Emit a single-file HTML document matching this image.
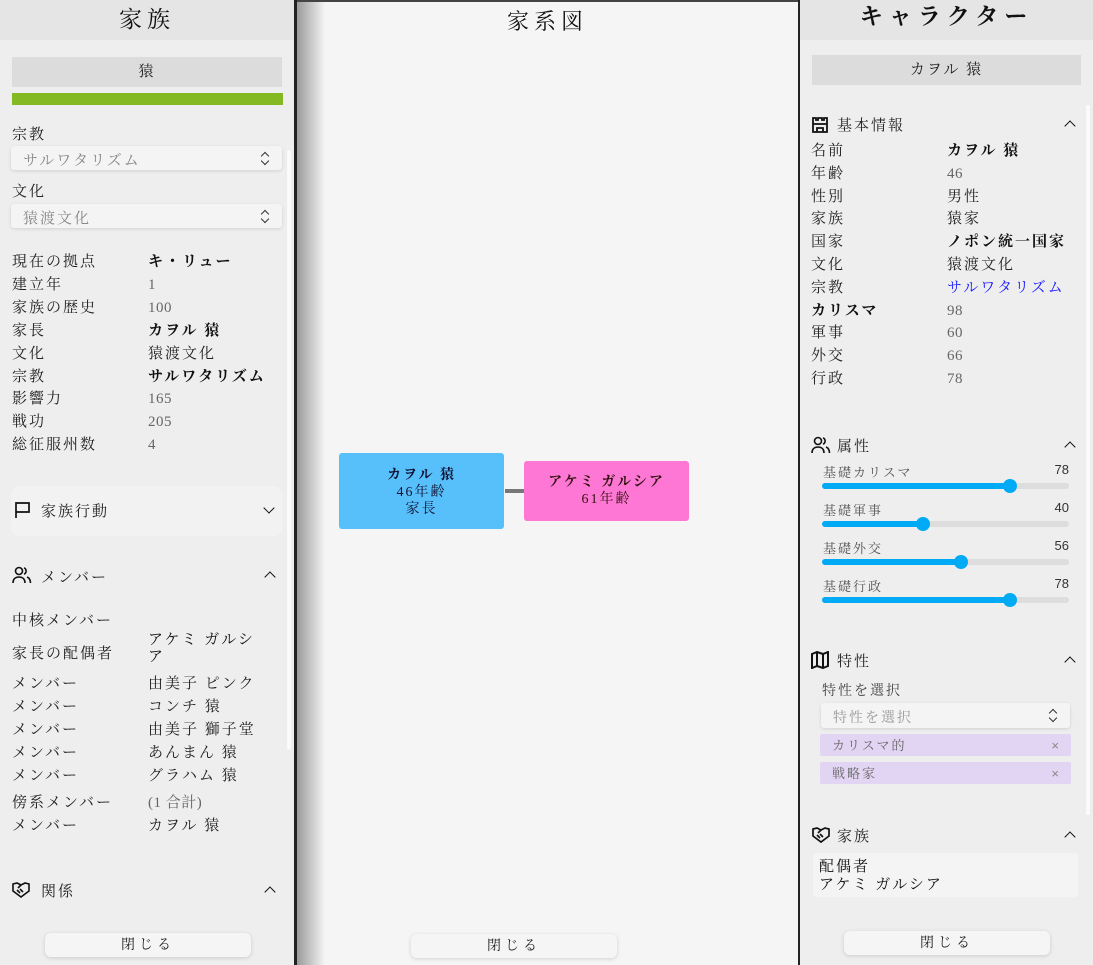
<!DOCTYPE html>
<html><head><meta charset="utf-8"><style>
*{margin:0;padding:0;box-sizing:border-box}
body{width:1093px;height:965px;overflow:hidden;background:#eee;font-family:"Liberation Serif","Noto Serif CJK SC",serif;color:#222;position:relative;font-size:15px;letter-spacing:2px}
.a{position:absolute;white-space:nowrap}
.hdr{position:absolute;top:0;height:40px;background:#e5e5e5;text-align:center;font-size:23px;line-height:40px;letter-spacing:5px;color:#111}
.btn{position:absolute;background:#dcdcdc;text-align:center;line-height:30px}
.sel{position:absolute;background:#f4f4f4;box-shadow:0 1px 3px rgba(0,0,0,.12);border-radius:3px;color:#888;padding-left:12px;display:flex;align-items:center;padding-top:2px}
.sel:after{content:"";position:absolute;right:14px;top:7px;width:5px;height:5px;border-left:1px solid #333;border-top:1px solid #333;transform:rotate(45deg)}
.sel:before{content:"";position:absolute;right:14px;top:12px;width:5px;height:5px;border-right:1px solid #333;border-bottom:1px solid #333;transform:rotate(45deg)}
.close{position:absolute;background:#f5f5f5;border-radius:6px;box-shadow:0 1px 4px rgba(0,0,0,.15);text-align:center;line-height:26px;font-size:14px;letter-spacing:4px}
.g{color:#666;letter-spacing:0.5px}
.b{font-weight:bold;color:#111}
.chev{position:absolute;width:8px;height:8px;border-left:1.6px solid #111;border-top:1.6px solid #111}
.up{transform:rotate(45deg)}
.dn{transform:rotate(225deg)}
.track{position:absolute;left:822px;width:247px;height:6px;border-radius:3px;background:#ddd}
.fill{position:absolute;left:0;top:0;height:6px;border-radius:3px;background:#00aaf5}
.knob{position:absolute;top:-4px;width:14px;height:14px;border-radius:50%;background:#00aaf5;margin-left:-7px}
.num{position:absolute;right:24px;font-family:"Liberation Sans",sans-serif;font-size:13px;color:#333;letter-spacing:0}
.sl{position:absolute;left:823px;font-size:13px;color:#555}
.tag{position:absolute;left:820px;width:251px;height:22px;background:#e2d4f3;color:#666;font-size:13px;line-height:23px;padding-left:12px;border-radius:2px}
.tag span{position:absolute;right:10px;color:#888;font-family:"Liberation Sans",sans-serif}
</style></head><body>
<!-- left panel -->
<div class="a" style="left:0;top:0;width:295px;height:965px;background:#eee"></div>
<div class="hdr" style="left:0;width:294px">家族</div>
<div class="btn" style="left:12px;top:57px;width:270px;height:30px">猿</div>
<div class="a" style="left:12px;top:93px;width:271px;height:12px;background:#84b923"></div>
<div class="a" style="left:12px;top:123px">宗教</div>
<div class="sel" style="left:11px;top:146px;width:271px;height:24px">サルワタリズム</div>
<div class="a" style="left:12px;top:180px">文化</div>
<div class="sel" style="left:11px;top:204px;width:271px;height:24px">猿渡文化</div>
<div class="a" style="left:12px;top:251px;line-height:22.9px">現在の拠点<br>建立年<br>家族の歴史<br>家長<br>文化<br>宗教<br>影響力<br>戦功<br>総征服州数</div>
<div class="a" style="left:148px;top:251px;line-height:22.9px"><span class="b">キ・リュー</span><br><span class="g">1</span><br><span class="g">100</span><br><span class="b">カヲル 猿</span><br>猿渡文化<br><span class="b">サルワタリズム</span><br><span class="g">165</span><br><span class="g">205</span><br><span class="g">4</span></div>
<div class="a" style="left:11px;top:486px;width:271px;height:50px;background:#f2f2f2;border-radius:8px"></div>
<svg class="a" style="left:14px;top:501px" width="18" height="18" viewBox="0 0 18 18" fill="none" stroke="#111" stroke-width="1.7"><path d="M2 17V2h13v9H2"/></svg>
<div class="a" style="left:41px;top:500px">家族行動</div>
<div class="chev dn" style="left:265px;top:504px"></div>
<svg class="a" style="left:12px;top:566px" width="20" height="18" viewBox="0 0 20 18" fill="none" stroke="#111" stroke-width="1.6"><circle cx="7" cy="5" r="3.5"/><path d="M1 17c0-4 2.5-6 6-6s6 2 6 6"/><path d="M12 1.8a3.5 3.5 0 0 1 0 6.4M15 11c2 .8 3.5 2.6 3.5 6"/></svg>
<div class="a" style="left:41px;top:566px">メンバー</div>
<div class="chev up" style="left:266px;top:573px"></div>
<div class="a" style="left:12px;top:609px">中核メンバー</div>
<div class="a" style="left:12px;top:642px">家長の配偶者</div>
<div class="a" style="left:148px;top:632px;line-height:17px;color:#111">アケミ ガルシ<br>ア</div>
<div class="a" style="left:12px;top:673px;line-height:22.9px">メンバー<br>メンバー<br>メンバー<br>メンバー<br>メンバー</div>
<div class="a" style="left:148px;top:673px;line-height:22.9px">由美子 ピンク<br>コンチ 猿<br>由美子 獅子堂<br>あんまん 猿<br>グラハム 猿</div>
<div class="a" style="left:12px;top:792px;line-height:22.9px">傍系メンバー<br>メンバー</div>
<div class="a" style="left:148px;top:792px;line-height:22.9px"><span class="g">(1 合計)</span><br>カヲル 猿</div>
<svg class="a" style="left:11px;top:881px" width="20" height="18" viewBox="0 0 20 18" fill="none" stroke="#111" stroke-width="1.6"><path d="M2 3l4-1 4 2 4-2 4 1v7l-8 6-8-6z"/><path d="M6 9l3 3M9 8l3 3M10 4l-3 3"/></svg>
<div class="a" style="left:41px;top:880px">関係</div>
<div class="chev up" style="left:266px;top:888px"></div>
<div class="close" style="left:45px;top:933px;width:206px;height:24px">閉じる</div>
<div class="a" style="left:287px;top:150px;width:4px;height:600px;background:#fafafa;border-radius:2px"></div>
<div class="a" style="left:294px;top:0;width:3px;height:965px;background:#222"></div>
<!-- middle -->
<div class="a" style="left:297px;top:0;width:501px;height:965px;background:#f5f5f5"></div>
<div class="a" style="left:297px;top:0;width:28px;height:965px;background:linear-gradient(90deg,#9a9a9a,#f5f5f5)"></div>
<div class="a" style="left:297px;top:0;width:501px;height:2px;background:#444"></div>
<div class="a" style="left:297px;top:5px;width:501px;text-align:center;font-size:22px;letter-spacing:5px;line-height:34px;color:#111">家系図</div>
<div class="a" style="left:339px;top:453px;width:165px;height:76px;background:#57bff9;border-radius:3px;text-align:center;font-size:14px;line-height:17px;padding-top:14px;color:#113"><b>カヲル 猿</b><br>46年齢<br>家長</div>
<div class="a" style="left:505px;top:489px;width:19px;height:4px;background:#777"></div>
<div class="a" style="left:524px;top:461px;width:165px;height:60px;background:#ff77d4;border-radius:3px;text-align:center;font-size:14px;line-height:17px;padding-top:13px;color:#311"><b>アケミ ガルシア</b><br>61年齢</div>
<div class="close" style="left:411px;top:934px;width:206px;height:24px">閉じる</div>
<!-- right -->
<div class="a" style="left:798px;top:0;width:2px;height:965px;background:#222"></div>
<div class="a" style="left:800px;top:0;width:293px;height:965px;background:#eee"></div>
<div class="hdr" style="left:800px;width:293px;font-weight:bold;top:-3px;letter-spacing:6px">キャラクター</div>
<div class="a" style="left:800px;top:37px;width:293px;height:3px;background:#e5e5e5"></div>
<div class="btn" style="left:812px;top:55px;width:269px;height:30px">カヲル 猿</div>
<svg class="a" style="left:811px;top:115px" width="18" height="18" viewBox="0 0 18 18" fill="none" stroke="#111" stroke-width="1.8"><path d="M2 17V3h3v2h2V3h4v2h2V3h3v14zM2 9h14M6 17v-4h6v4"/></svg>
<div class="a" style="left:837px;top:114px">基本情報</div>
<div class="chev up" style="left:1066px;top:122px"></div>
<div class="a" style="left:811px;top:140px;line-height:22.8px">名前<br>年齢<br>性別<br>家族<br>国家<br>文化<br>宗教<br><span class="b">カリスマ</span><br>軍事<br>外交<br>行政</div>
<div class="a" style="left:947px;top:140px;line-height:22.8px"><span class="b">カヲル 猿</span><br><span class="g">46</span><br>男性<br>猿家<br><span class="b">ノポン統一国家</span><br>猿渡文化<br><span style="color:#1a1aff">サルワタリズム</span><br><span class="g">98</span><br><span class="g">60</span><br><span class="g">66</span><br><span class="g">78</span></div>
<svg class="a" style="left:811px;top:436px" width="20" height="18" viewBox="0 0 20 18" fill="none" stroke="#111" stroke-width="1.6"><circle cx="7" cy="5" r="3.5"/><path d="M1 17c0-4 2.5-6 6-6s6 2 6 6"/><path d="M12 1.8a3.5 3.5 0 0 1 0 6.4M15 11c2 .8 3.5 2.6 3.5 6"/></svg>
<div class="a" style="left:837px;top:435px">属性</div>
<div class="chev up" style="left:1066px;top:443px"></div>
<div class="sl" style="top:462px">基礎カリスマ</div><div class="num" style="top:462px">78</div>
<div class="track" style="top:483px"><div class="fill" style="width:188px"></div><div class="knob" style="left:188px"></div></div>
<div class="sl" style="top:500px">基礎軍事</div><div class="num" style="top:500px">40</div>
<div class="track" style="top:521px"><div class="fill" style="width:101px"></div><div class="knob" style="left:101px"></div></div>
<div class="sl" style="top:538px">基礎外交</div><div class="num" style="top:538px">56</div>
<div class="track" style="top:559px"><div class="fill" style="width:139px"></div><div class="knob" style="left:139px"></div></div>
<div class="sl" style="top:576px">基礎行政</div><div class="num" style="top:576px">78</div>
<div class="track" style="top:597px"><div class="fill" style="width:188px"></div><div class="knob" style="left:188px"></div></div>
<svg class="a" style="left:811px;top:651px" width="18" height="18" viewBox="0 0 18 18" fill="none" stroke="#111" stroke-width="2"><path d="M1 3l5-2 6 2 5-2v14l-5 2-6-2-5 2zM6 1v14M12 3v14"/></svg>
<div class="a" style="left:837px;top:650px">特性</div>
<div class="chev up" style="left:1066px;top:658px"></div>
<div class="a" style="left:822px;top:680px;font-size:14px;color:#444">特性を選択</div>
<div class="sel" style="left:821px;top:703px;width:249px;height:25px;font-size:14px;color:#999">特性を選択</div>
<div class="tag" style="top:734px">カリスマ的<span>×</span></div>
<div class="tag" style="top:762px">戦略家<span>×</span></div>
<svg class="a" style="left:811px;top:826px" width="20" height="18" viewBox="0 0 20 18" fill="none" stroke="#111" stroke-width="1.7"><path d="M2 3l4-1 4 2 4-2 4 1v7l-8 6-8-6z"/><path d="M6 9l3 3M9 8l3 3M10 4l-3 3"/></svg>
<div class="a" style="left:837px;top:825px">家族</div>
<div class="chev up" style="left:1066px;top:833px"></div>
<div class="a" style="left:813px;top:853px;width:265px;height:44px;background:#f4f4f4;border-radius:3px;padding:5px 0 0 6px;line-height:18px;color:#111">配偶者<br>アケミ ガルシア</div>
<div class="close" style="left:844px;top:931px;width:206px;height:24px">閉じる</div>
<div class="a" style="left:1086px;top:105px;width:4px;height:710px;background:#fafafa;border-radius:2px"></div>
</body></html>
